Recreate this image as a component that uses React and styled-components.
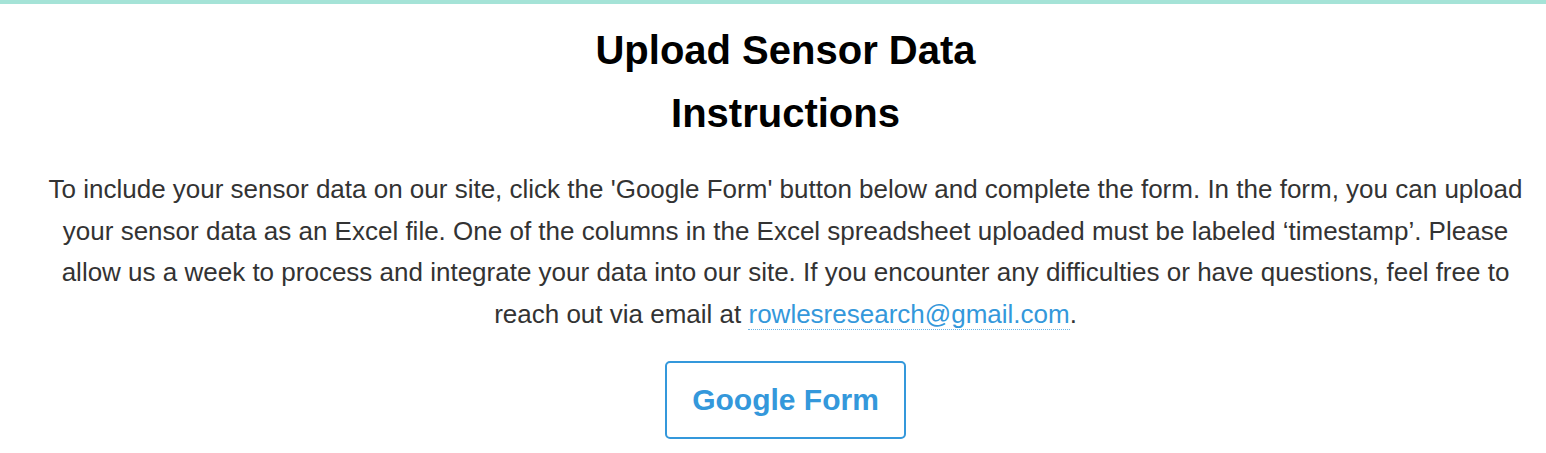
import styled, { createGlobalStyle } from "styled-components";

const GlobalStyle = createGlobalStyle`
    html, body {
        margin: 0;
        padding: 0;
        background: #ffffff;
    }
    body {
        font-family: "Liberation Sans", Arial, sans-serif;
    }
`;

const TopBar = styled.div`
    height: 4px;
    background: #a5e3d7;
`;

const Section = styled.section`
    display: flex;
    flex-direction: column;
    align-items: center;
    padding: 22px 0 0 25px;
    text-align: center;
`;

const Title = styled.h2`
    margin: 0;
    color: #000000;
    font-size: 40px;
    font-weight: 700;
    line-height: 48px;
    margin-bottom: ${(p) => p.$gap || 0}px;
`;

const Text = styled.p`
    max-width: 1490px;
    margin: 32px 0 0;
    color: #333333;
    font-size: 26px;
    line-height: 41.6px;
`;

const Link = styled.a`
    color: #3498db;
    text-decoration: none;
    border-bottom: 1px dotted #6bb6e8;
`;

const Button = styled.a`
    display: inline-block;
    margin-top: 26px;
    padding: 20px 25px;
    border: 2px solid #3498db;
    border-radius: 5px;
    color: #3498db;
    font-size: 30px;
    font-weight: 700;
    line-height: 34px;
    text-decoration: none;
`;

export default function App() {
    return (
        <>
            <GlobalStyle />
            <TopBar />
            <Section>
                <Title $gap={15}>Upload Sensor Data</Title>
                <Title>Instructions</Title>
                <Text>
                    To include your sensor data on our site, click the 'Google Form' button below and complete the form. In the form, you can upload your sensor data as an Excel file. One of the columns in the Excel spreadsheet uploaded must be labeled ‘timestamp’. Please allow us a week to process and integrate your data into our site. If you encounter any difficulties or have questions, feel free to reach out via email at <Link href="mailto:rowlesresearch@gmail.com">rowlesresearch@gmail.com</Link>.
                </Text>
                <Button href="#">Google Form</Button>
            </Section>
        </>
    )
}
